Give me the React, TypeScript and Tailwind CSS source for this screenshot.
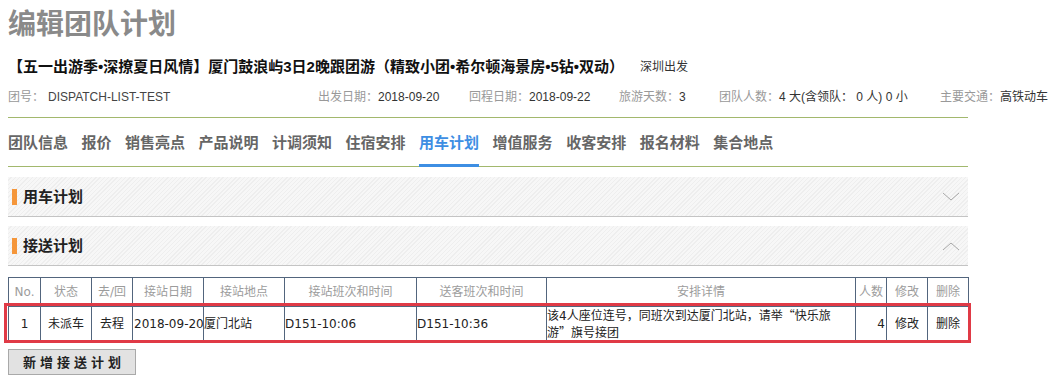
import React from "react";

const tabs = ["团队信息", "报价", "销售亮点", "产品说明", "计调须知", "住宿安排", "用车计划", "增值服务", "收客安排", "报名材料", "集合地点"];

function Chevron({ up }: { up?: boolean }) {
  return (
    <svg width="18" height="10" viewBox="0 0 18 10" className="mr-[8px]">
      <polyline
        points={up ? "1,9 9,2 17,9" : "1,1 9,8 17,1"}
        fill="none"
        stroke="#a8a8a8"
        strokeWidth="1"
      />
    </svg>
  );
}

function Band({ title, up, className }: { title: string; up?: boolean; className: string }) {
  return (
    <div
      className={
        "h-[40px] border-b border-[#c4c4c4] flex items-center justify-between bg-[image:repeating-linear-gradient(135deg,#f7f7f7_0px,#f7f7f7_2px,#eeeeee_2px,#eeeeee_3px)] " +
        className
      }
    >
      <div className="flex items-center">
        <span className="ml-[4px] w-[5px] h-[16px] bg-[#f5963a]" />
        <span className="ml-[6px] text-[15px] font-bold text-[#222] font-['Noto_Sans_CJK_SC',sans-serif]">{title}</span>
      </div>
      <Chevron up={up} />
    </div>
  );
}

export default function App() {
  const th = "border border-[#52657d] text-[12px] font-normal text-[#9c9c9c] text-center p-0";
  const td = "border border-[#52657d] text-[12px] text-[#222] p-0 whitespace-nowrap";
  const q = "font-['Noto_Sans_CJK_SC',sans-serif]";
  return (
    <div className="w-[1053px] h-[387px] overflow-hidden bg-white font-['Liberation_Sans','Noto_Sans_CJK_SC',sans-serif]">
      <div className="ml-[8px] w-[960px]">
        <h1 className="h-[44px] leading-[44px] text-[28px] font-bold text-[#8a8a8a] font-['Noto_Sans_CJK_SC',sans-serif]">
          编辑团队计划
        </h1>
        <div className="mt-[8px] h-[30px] flex items-center whitespace-nowrap">
          <span className="text-[15px] font-bold text-[#111]">
            【五一出游季•深撩夏日风情】厦门鼓浪屿3日2晚跟团游（精致小团•希尔顿海景房•5钻•双动）
          </span>
          <span className="ml-[16px] text-[12px] text-[#333]">深圳出发</span>
        </div>
        <div className="h-[30px] flex items-center whitespace-nowrap text-[12px] w-[1045px]">
          <div className="w-[310px]">
            <span className="text-[#999]">团号：</span>
            <span className="ml-[4px] text-[#444]">DISPATCH-LIST-TEST</span>
          </div>
          <div className="w-[151px]">
            <span className="text-[#999]">出发日期：</span>
            <span className="text-[#333]">2018-09-20</span>
          </div>
          <div className="w-[150px]">
            <span className="text-[#999]">回程日期：</span>
            <span className="text-[#333]">2018-09-22</span>
          </div>
          <div className="w-[100px]">
            <span className="text-[#999]">旅游天数：</span>
            <span className="text-[#333]">3</span>
          </div>
          <div className="w-[221px]">
            <span className="text-[#999]">团队人数：</span>
            <span className="text-[#333]">4 大(含领队： 0 人) 0 小</span>
          </div>
          <div>
            <span className="text-[#999]">主要交通：</span>
            <span className="text-[#333]">高铁动车</span>
          </div>
        </div>
        <div className="mt-[5px] border-t border-[#a2b86d]" />
        <div className="flex gap-[13.5px] h-[49px] border-b border-[#a2b86d] font-['Noto_Sans_CJK_SC',sans-serif]">
          {tabs.map((t) =>
            t === "用车计划" ? (
              <div
                key={t}
                className="flex items-center h-[49px] -mb-px pt-[2px] border-b-[3px] border-[#3d8ee3] text-[15px] font-bold text-[#3d8ee3] whitespace-nowrap"
              >
                {t}
              </div>
            ) : (
              <div key={t} className="flex items-center h-[48px] text-[15px] font-bold text-[#666] whitespace-nowrap">
                {t}
              </div>
            )
          )}
        </div>
        <Band title="用车计划" className="mt-[10px]" />
        <Band title="接送计划" up className="mt-[9px]" />
        <div className="relative mt-[11px]">
          <table className="table-fixed w-[960px] border-collapse font-['DejaVu_Sans','Noto_Sans_CJK_SC',sans-serif]">
            <colgroup>
              <col className="w-[32px]" />
              <col className="w-[51px]" />
              <col className="w-[41px]" />
              <col className="w-[71px]" />
              <col className="w-[81px]" />
              <col className="w-[132px]" />
              <col className="w-[130px]" />
              <col className="w-[309px]" />
              <col className="w-[31px]" />
              <col className="w-[41px]" />
              <col className="w-[41px]" />
            </colgroup>
            <thead>
              <tr className="h-[29px]">
                <th className={th + " font-bold"}>No.</th>
                <th className={th}>状态</th>
                <th className={th}>去/回</th>
                <th className={th}>接站日期</th>
                <th className={th}>接站地点</th>
                <th className={th}>接站班次和时间</th>
                <th className={th}>送客班次和时间</th>
                <th className={th}>安排详情</th>
                <th className={th}>人数</th>
                <th className={th}>修改</th>
                <th className={th}>删除</th>
              </tr>
            </thead>
            <tbody>
              <tr className="h-[35px]">
                <td className={td + " text-center"}>1</td>
                <td className={td + " text-center"}>未派车</td>
                <td className={td + " text-center"}>去程</td>
                <td className={td + " text-left pl-[1px]"}>2018-09-20</td>
                <td className={td + " text-left"}>厦门北站</td>
                <td className={td + " text-left"}>D151-10:06</td>
                <td className={td + " text-left"}>D151-10:36</td>
                <td className={td + " text-left leading-[16px]"}>
                  该4人座位连号，同班次到达厦门北站，请举<span className={q}>“</span>快乐旅
                  <br />
                  游<span className={q}>”</span>旗号接团
                </td>
                <td className={td + " text-right pr-[1px]"}>4</td>
                <td className={td + " text-center"}>修改</td>
                <td className={td + " text-center"}>删除</td>
              </tr>
            </tbody>
          </table>
          <div className="absolute top-[26px] left-[-4px] w-[967px] h-[40px] border-[3px] border-[#e03a46] pointer-events-none" />
        </div>
        <button className="mt-[7px] w-[128px] h-[26px] border border-[#a9a9a9] bg-[#e2e2e2] text-[13px] font-bold tracking-[4px] pl-[4px] text-[#222] font-['Noto_Sans_CJK_SC',sans-serif]">
          新增接送计划
        </button>
      </div>
    </div>
  );
}
